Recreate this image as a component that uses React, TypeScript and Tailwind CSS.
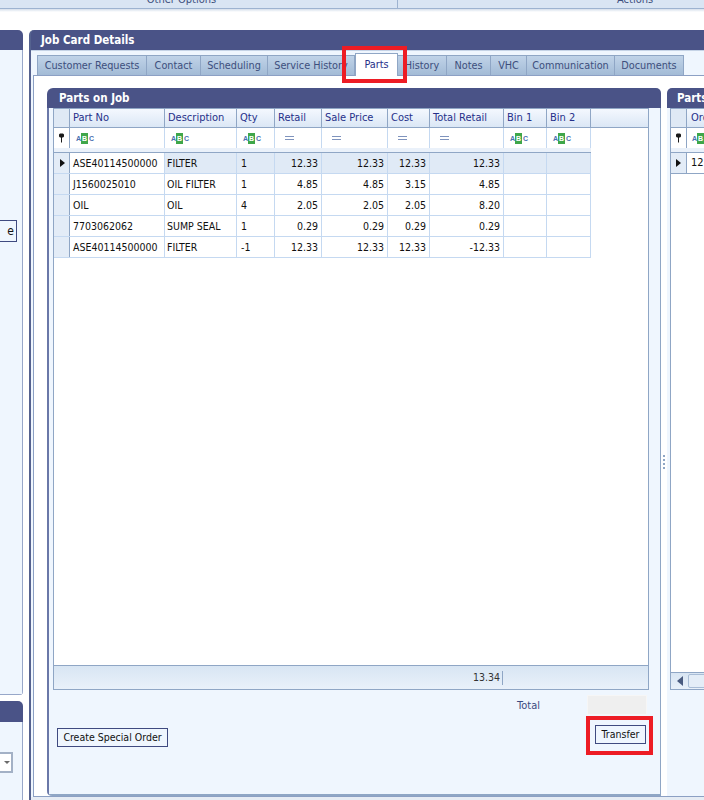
import React from 'react';

const columns = [
  { label: 'Part No', width: 'w-[95px]', filter: 'abc', align: 'text-left pl-[3px]' },
  { label: 'Description', width: 'w-[72px]', filter: 'abc', align: 'text-left pl-[2px]' },
  { label: 'Qty', width: 'w-[38px]', filter: 'abc', align: 'text-left pl-[4px]' },
  { label: 'Retail', width: 'w-[47px]', filter: 'eq', align: 'text-right pr-[3px]' },
  { label: 'Sale Price', width: 'w-[66px]', filter: 'eq', align: 'text-right pr-[3px]' },
  { label: 'Cost', width: 'w-[42px]', filter: 'eq', align: 'text-right pr-[3px]' },
  { label: 'Total Retail', width: 'w-[74px]', filter: 'eq', align: 'text-right pr-[3px]' },
  { label: 'Bin 1', width: 'w-[43px]', filter: 'abc', align: 'text-left pl-[3px]' },
  { label: 'Bin 2', width: 'w-[44px]', filter: 'abc', align: 'text-left pl-[3px]' },
];

const rows = [
  ['ASE40114500000', 'FILTER', '1', '12.33', '12.33', '12.33', '12.33', '', ''],
  ['J1560025010', 'OIL FILTER', '1', '4.85', '4.85', '3.15', '4.85', '', ''],
  ['OIL', 'OIL', '4', '2.05', '2.05', '2.05', '8.20', '', ''],
  ['7703062062', 'SUMP SEAL', '1', '0.29', '0.29', '0.29', '0.29', '', ''],
  ['ASE40114500000', 'FILTER', '-1', '12.33', '12.33', '12.33', '-12.33', '', ''],
];

const tabs = [
  { label: 'Customer Requests', width: 'w-[110px]' },
  { label: 'Contact', width: 'w-[54px]' },
  { label: 'Scheduling', width: 'w-[67px]' },
  { label: 'Service History', width: 'w-[87px]' },
  { label: 'Parts', width: 'w-[43px]', active: true },
  { label: 'History', width: 'w-[49px]' },
  { label: 'Notes', width: 'w-[44px]' },
  { label: 'VHC', width: 'w-[36px]' },
  { label: 'Communication', width: 'w-[88px]' },
  { label: 'Documents', width: 'w-[69px]' },
];

const AbcIcon = () => (
  <span className="flex h-[11px] items-center font-['Liberation_Sans',sans-serif] text-[7px] font-bold leading-none text-[#4a6fb0]">
    <span className="w-[4px] shrink-0 text-center">A</span>
    <span className="ml-[1px] flex h-[11px] w-[7px] shrink-0 items-center justify-center bg-[#3fa64a] text-white">B</span>
    <span className="ml-[1px] w-[4px] shrink-0 text-center">C</span>
  </span>
);

const EqualIcon = () => (
  <span className="ml-[4px] flex w-[9px] flex-col gap-[2px]">
    <span className="h-px bg-[#7f93bd]" />
    <span className="h-px bg-[#7f93bd]" />
  </span>
);

const PinIcon = () => (
  <svg width="7" height="10" viewBox="0 0 7 10">
    <path d="M1 1.5 L2 0.5 H5 L6 1.5 V3.5 L5 4.5 H4 V9.5 H3 V4.5 H2 L1 3.5 Z" fill="#1a1a1a" />
  </svg>
);

const RowArrow = () => (
  <svg width="5" height="8" viewBox="0 0 5 8">
    <path d="M0 0 L5 4 L0 8 Z" fill="#111" />
  </svg>
);

const PartsGrid = () => (
  <div className="flex h-[582px] w-[596px] flex-col border border-[#8fa6c5] bg-white">
    {/* column captions */}
    <div className="flex h-[19px] shrink-0 border-b border-[#8fa6c5] bg-gradient-to-b from-[#f4f8fe] to-[#dbe7f5]">
      <div className="w-[16px] shrink-0 border-r border-[#8fa6c5] bg-[#dfe9f5]" />
      {columns.map((col) => (
        <div key={col.label} className={`${col.width} flex shrink-0 items-center border-r border-[#8fa6c5] pl-[3px] text-[11px] text-[#26308a]`}>
          {col.label}
        </div>
      ))}
    </div>
    {/* filter row */}
    <div className="flex h-[20px] shrink-0">
      <div className="flex w-[16px] shrink-0 items-center justify-center border-r border-[#8fa6c5]">
        <PinIcon />
      </div>
      {columns.map((col) => (
        <div key={col.label} className={`${col.width} flex shrink-0 items-center border-r border-[#c5d9f1] pl-[6px]`}>
          {col.filter === 'abc' ? <AbcIcon /> : <EqualIcon />}
        </div>
      ))}
    </div>
    <div className="h-[4px] w-[537px] shrink-0 bg-[#eaf1fa]" />
    {/* data rows */}
    <div className="flex-1">
      <div className="w-[537px] border-t border-[#8fa6c5]">
        {rows.map((row, r) => (
          <div key={r} className={`flex h-[21px] border-b border-[#c5d9f1] ${r === 0 ? 'bg-[#e0eaf6]' : ''}`}>
            <div className="flex w-[16px] shrink-0 items-center justify-center border-r border-[#8fa6c5] bg-[#e3ecf7] pl-[1px]">
              {r === 0 && <RowArrow />}
            </div>
            {columns.map((col, c) => (
              <div
                key={col.label}
                className={`${col.width} ${col.align} shrink-0 border-r border-[#c5d9f1] leading-[20px] text-[#111] ${r === 0 && c === 0 ? 'bg-white' : ''}`}
              >
                {row[c]}
              </div>
            ))}
          </div>
        ))}
      </div>
    </div>
    {/* summary footer */}
    <div className="flex h-[24px] shrink-0 items-center border-t border-[#8fa6c5] bg-gradient-to-b from-[#d8e5f3] to-[#e9f1fa] text-[#333]">
      <div className="flex h-[14px] w-[449px] items-center justify-end border-r border-[#8fa6c5] pr-[2px]">13.34</div>
    </div>
  </div>
);

const SideGrid = () => (
  <div className="flex h-[582px] flex-col border-y border-l border-[#8fa6c5] bg-white">
    <div className="flex h-[19px] shrink-0 border-b border-[#8fa6c5] bg-gradient-to-b from-[#f4f8fe] to-[#dbe7f5]">
      <div className="w-[16px] shrink-0 border-r border-[#8fa6c5] bg-[#dfe9f5]" />
      <div className="flex items-center pl-[4px] text-[11px] text-[#26308a]">Order No</div>
    </div>
    <div className="flex h-[20px] shrink-0">
      <div className="flex w-[16px] shrink-0 items-center justify-center border-r border-[#8fa6c5]">
        <PinIcon />
      </div>
      <div className="flex items-center pl-[5px]">
        <AbcIcon />
      </div>
    </div>
    <div className="h-[4px] shrink-0 bg-[#eaf1fa]" />
    <div className="flex h-[22px] border-y border-[#8fa6c5]">
      <div className="flex w-[16px] shrink-0 items-center justify-center border-r border-[#8fa6c5] bg-[#e3ecf7]">
        <RowArrow />
      </div>
      <div className="pl-[4px] text-[11px] leading-[20px] text-[#111]">12</div>
    </div>
    <div className="flex-1" />
    <div className="flex h-[17px] shrink-0 items-center border-t border-[#8fa6c5] bg-gradient-to-b from-[#d8e5f3] to-[#e9f1fa]">
      <svg width="6" height="10" viewBox="0 0 6 10" className="ml-[6px]">
        <path d="M6 0 L0 5 L6 10 Z" fill="#4a5c80" />
      </svg>
      <div className="ml-[5px] h-[14px] w-[60px] rounded-[2px] border border-[#a9bdd6] bg-[#e4edf7]" />
    </div>
  </div>
);

export default function App() {
  return (
    <div className="flex h-[800px] w-[704px] flex-col overflow-hidden bg-white font-['DejaVu_Sans',sans-serif] text-[10.5px] [font-stretch:condensed]">
      {/* clipped ribbon above */}
      <div className="flex h-[9px] shrink-0 overflow-hidden border-b border-[#9db3d0] bg-[#d9e5f3] text-[11px] leading-[14px] text-[#3d4f7d]">
        <div className="-mt-[7px] w-[398px] shrink-0 border-r border-[#9db3d0] pr-[34px] text-center">Other Options</div>
        <div className="-mt-[7px] pl-[219px]">Actions</div>
      </div>
      <div className="h-[3px] shrink-0 bg-gradient-to-b from-[#d5dfeb] to-white" />
      <div className="h-[18px] shrink-0" />

      <div className="flex min-h-0 flex-1">
        {/* left column, mostly off screen */}
        <div className="flex w-[23px] shrink-0 flex-col gap-[6px]">
          <div className="flex h-[665px] flex-col overflow-hidden rounded-tr-[5px] rounded-br-[4px] bg-[#4a5387]">
            <div className="h-[20px] shrink-0" />
            <div className="flex flex-1 flex-col border-r border-b border-[#97a7c9] bg-[#eff6fe] pt-[170px]">
              <div className="flex h-[22px] w-[17px] items-center justify-end border border-l-0 border-[#3f4a80] pr-[2px] text-[12px] text-[#111]">e</div>
            </div>
          </div>
          <div className="flex flex-1 flex-col overflow-hidden rounded-tr-[5px] bg-[#4a5387]">
            <div className="h-[21px] shrink-0" />
            <div className="flex-1 border-r border-[#97a7c9] bg-[#eff6fe] pt-[30px]">
              <div className="flex h-[21px] w-[13px] items-center justify-end border-2 border-l-0 border-[#a3b1c6] bg-white pr-[1px]">
                <svg width="6" height="3" viewBox="0 0 6 3">
                  <path d="M0 0 H6 L3 3 Z" fill="#6b6b6b" />
                </svg>
              </div>
            </div>
          </div>
        </div>

        <div className="w-[6px] shrink-0" />

        {/* job card panel */}
        <div className="flex w-[675px] shrink-0 flex-col rounded-tl-[5px] border-l-2 border-[#55628f] bg-[#4a5387]">
          <div className="flex h-[20px] shrink-0 items-center pt-[2px] pl-[10px] text-[11.5px] font-bold text-white">Job Card Details</div>
          <div className="flex min-h-0 flex-1 flex-col border-t border-[#c5d3e6] bg-[#eff6fe]">
            <div className="flex h-[24px] shrink-0 items-end pl-[6px] text-[10.8px]">
              {tabs.map((tab) =>
                tab.active ? (
                  <div key={tab.label} className={`${tab.width} relative z-10 -mb-px flex h-[23px] shrink-0 items-center justify-center border border-b-0 border-[#8fa6c5] bg-white text-[#26308a]`}>
                    {tab.label}
                    <div className="absolute -top-[8px] -right-[10px] -bottom-[7px] -left-[14px] border-4 border-[#ed1c24]" />
                  </div>
                ) : (
                  <div key={tab.label} className={`${tab.width} flex h-[20px] shrink-0 items-center justify-center border-t border-r border-[#8fa6c5] bg-gradient-to-b from-[#c0d3e8] to-[#a3bbd6] pt-[1px] whitespace-nowrap text-[#3d4f7d] first:border-l`}>
                    {tab.label}
                  </div>
                ),
              )}
            </div>

            <div className="ml-[2px] flex min-h-0 flex-1 border-t border-b border-l border-[#8ca0c4] bg-white pt-[12px] pl-[13px]">
              {/* parts on job */}
              <div className="flex w-[614px] shrink-0 flex-col overflow-hidden rounded-tl-[6px] rounded-tr-[5px] rounded-bl-[5px] bg-[#4a5387]">
                <div className="flex h-[20px] shrink-0 items-center pt-[1px] pl-[12px] text-[11.5px] font-bold text-white">Parts on Job</div>
                <div className="flex flex-1 flex-col border-r border-b-2 border-l-2 border-r-[#8fa6c5] border-b-[#8fa6c5] border-l-[#6a78a8] bg-[#eff6fe] pl-[4px]">
                  <PartsGrid />
                  <div className="mt-[5px] flex h-[20px] items-center justify-end pr-[13px]">
                    <span className="mr-[47px] pt-[3px] text-[11px] text-[#3b4a80]">Total</span>
                    <div className="h-[20px] w-[60px] border border-[#f6f6f6] bg-[#efefef]" />
                  </div>
                  <div className="mt-[10px] flex items-start justify-between pr-[14px] pl-[4px]">
                    <button className="mt-[3px] h-[19px] w-[111px] border border-[#3f4a80] pt-[1px] text-[#111]">Create Special Order</button>
                    <div className="relative">
                      <button className="block h-[19px] w-[51px] border border-[#3f4a80] pt-[1px] text-[#111]">Transfer</button>
                      <div className="absolute -top-[9px] -right-[7px] -bottom-[11px] -left-[9px] border-4 border-[#ed1c24]" />
                    </div>
                  </div>
                </div>
              </div>

              {/* splitter */}
              <div className="flex w-[6px] shrink-0 flex-col items-center justify-center gap-[2px] pt-[40px]">
                <span className="h-[2px] w-[2px] bg-[#8fa6c5]" />
                <span className="h-[2px] w-[2px] bg-[#8fa6c5]" />
                <span className="h-[2px] w-[2px] bg-[#8fa6c5]" />
                <span className="h-[2px] w-[2px] bg-[#8fa6c5]" />
              </div>

              {/* parts on order, cut by the window edge */}
              <div className="flex w-[100px] shrink-0 flex-col overflow-hidden rounded-tl-[5px] bg-[#4a5387]">
                <div className="flex h-[20px] shrink-0 items-center pt-[1px] pl-[10px] text-[11.5px] font-bold whitespace-nowrap text-white">Parts on Order</div>
                <div className="flex-1 bg-[#eff6fe] pl-[3px]">
                  <SideGrid />
                </div>
              </div>
            </div>
            <div className="h-[3px] shrink-0 bg-[#e6ecf4]" />
          </div>
        </div>
      </div>
    </div>
  );
}
